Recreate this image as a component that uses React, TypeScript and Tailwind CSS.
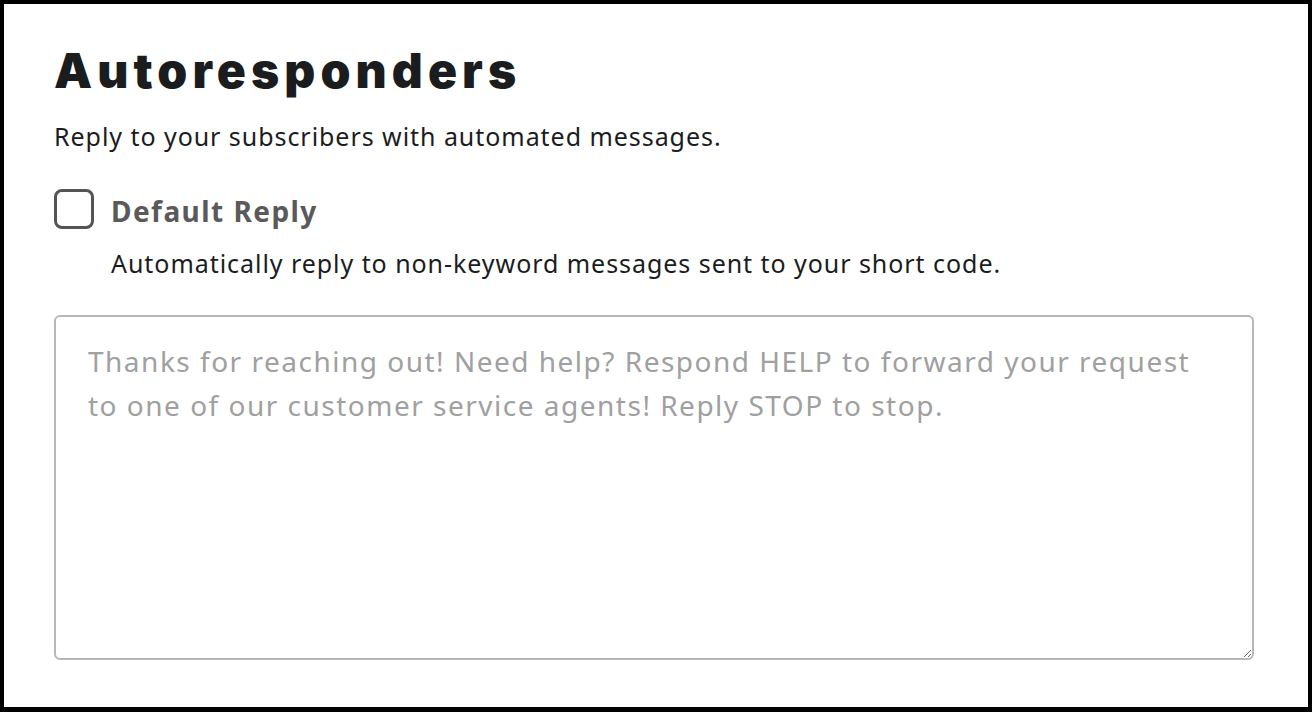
import React from 'react';

const App = () => {
  return (
    <div className="h-[712px] w-[1312px] bg-black pt-[4px] pl-[4px] pr-[4px] pb-[5px]">
      <div className="h-full w-full bg-white pl-[50px] pr-[54px] pt-[39px] font-['Noto_Sans',sans-serif]">
        {/* Title */}
        <h1 className="font-['Inter',sans-serif] text-[48px] font-black leading-[56px] tracking-[5.1px] text-[#1b1c1e]">
          Autoresponders
        </h1>
        <p className="mt-[21px] text-[25px] leading-[32px] tracking-[0.95px] text-[#1b1c1e]">
          Reply to your subscribers with automated messages.
        </p>

        {/* Default reply toggle */}
        <label className="mt-[37px] flex items-center gap-[17px]">
          <span className="h-[40px] w-[40px] rounded-[8px] border-[3px] border-[#545454] bg-white" />
          <span className="pt-[4px] text-[28px] font-bold leading-[36px] tracking-[1.45px] text-[#5a5a5a]">Default Reply</span>
        </label>
        <p className="mt-[18px] pl-[57px] text-[25px] leading-[32px] tracking-[0.95px] text-[#1b1c1e]">
          Automatically reply to non-keyword messages sent to your short code.
        </p>

        {/* Reply text */}
        <textarea
          className="mt-[36px] block h-[345px] w-[1200px] resize-y rounded-[6px] border-2 border-[#b7b7b7] pl-[32px] pr-[38px] py-[22px] text-[28px] leading-[44px] tracking-[1.5px] text-[#1b1c1e] outline-none placeholder:text-[#a0a0a0]"
          placeholder="Thanks for reaching out! Need help? Respond HELP to forward your request to one of our customer service agents! Reply STOP to stop."
        />
      </div>
    </div>
  );
};

export default App;
